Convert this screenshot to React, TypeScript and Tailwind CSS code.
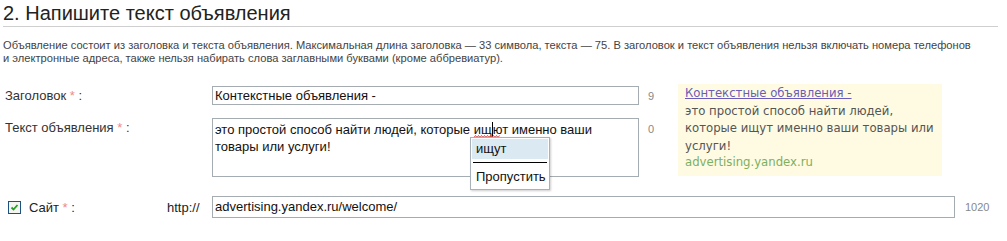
import React from "react";

const sans = { fontFamily: '"Liberation Sans", Arial, sans-serif' };

function Star() {
  return <span className="text-[#f08a8a]">*</span>;
}

function Squiggle() {
  return (
    <svg className="absolute left-0 bottom-[-1px]" width="26" height="3" viewBox="0 0 26 3">
      <path
        d="M0 2.5 L1.5 0.5 L3 2.5 L4.5 0.5 L6 2.5 L7.5 0.5 L9 2.5 L10.5 0.5 L12 2.5 L13.5 0.5 L15 2.5 L16.5 0.5 L18 2.5 L19.5 0.5 L21 2.5 L22.5 0.5 L24 2.5 L25.5 0.5"
        fill="none"
        stroke="#d94a4a"
        strokeWidth="1"
      />
    </svg>
  );
}

export default function App() {
  return (
    <div className="w-[1007px] h-[241px] bg-white text-[#333] overflow-hidden" style={sans}>
      {/* заголовок секции */}
      <div className="pl-[3px] pt-[2px] pr-[9px]">
        <h2 className="text-[20px] leading-[22px] text-[#222] pb-[2px] border-b border-[#cfcfcf]">
          2. Напишите текст объявления
        </h2>
        <p className="mt-[12px] text-[11.15px] leading-[13px] text-[#444]">
          Объявление состоит из заголовка и текста объявления. Максимальная длина заголовка — 33 символа, текста — 75. В заголовок и текст объявления нельзя включать номера телефонов
          <br />и электронные адреса, также нельзя набирать слова заглавными буквами (кроме аббревиатур).
        </p>
      </div>

      {/* поля */}
      <div className="flex mt-[20px]">
        <div className="flex flex-col gap-[13px]">
          <div className="flex items-start">
            <label className="w-[212px] pl-[5px] pt-[3px] text-[13px] leading-[15px]">
              Заголовок <Star /> :
            </label>
            <div className="w-[427px] h-[19px] mt-[1px] border border-[#a5acb2] px-[2px] text-[13px] leading-[17px] text-[#111]">
              Контекстные объявления -
            </div>
            <span className="w-[39px] pl-[9px] pt-[5px] text-[11px] leading-[13px] text-[#888]">9</span>
          </div>
          <div className="flex items-start">
            <label className="w-[212px] pl-[5px] pt-[2px] text-[13px] leading-[15px]">
              Текст объявления <Star /> :
            </label>
            <div className="relative w-[427px] h-[59px] border border-[#a5acb2] px-[2px] pt-[2px] text-[13px] leading-[17px] text-[#111]">
              это простой способ найти людей, которые{" "}
              <span className="relative">
                ищ<span className="inline-block w-px h-[15px] bg-black align-[-3px]" />ют
                <Squiggle />
              </span>{" "}
              именно ваши
              <br />
              товары или услуги!
              <div className="absolute left-[257px] top-[18px] w-[80px] bg-white border border-[#a8b0b8] shadow-[1px_1px_2px_rgba(0,0,0,0.2)] p-[1px] z-10">
                <div className="bg-[#dbe9f2] h-[20px] px-[4px] text-[13px] leading-[20px] text-[#111]">ищут</div>
                <div className="h-[1px] bg-black mt-[3px] mb-[4px] mx-[1px]" />
                <div className="h-[21px] px-[4px] text-[13px] leading-[20px] text-[#111]">Пропустить</div>
              </div>
            </div>
            <span className="w-[39px] pl-[9px] pt-[5px] text-[11px] leading-[13px] text-[#888]">0</span>
          </div>
        </div>

        {/* предпросмотр */}
        <div
          className="w-[264px] h-[92px] bg-[#fffbe3] mt-[-1px] px-[7px] pt-[1px] text-[11.7px] leading-[17.5px] text-[#555]"
          style={{ fontFamily: '"DejaVu Sans", Verdana, sans-serif' }}
        >
          <a className="text-[#6a5cb8] underline">Контекстные объявления -</a>
          <div>это простой способ найти людей, которые ищут именно ваши товары или услуги!</div>
          <div className="text-[#7caf62] mt-[-1px]">advertising.yandex.ru</div>
        </div>
      </div>

      {/* сайт */}
      <div className="flex items-center mt-[19px]">
        <div className="w-[167px] flex items-center pl-[8px]">
          <span className="w-[13px] h-[13px] border border-[#1c5180] bg-[#f4f4f0] flex items-center justify-center">
            <svg width="9" height="9" viewBox="0 0 9 9">
              <path d="M1.5 4.5 L3.5 6.5 L7.5 2" fill="none" stroke="#21a121" strokeWidth="1.8" />
            </svg>
          </span>
          <span className="ml-[8px] text-[13px] leading-[15px] text-[#222]">
            Сайт <Star /> :
          </span>
        </div>
        <span className="w-[45px] text-[13px] leading-[15px] text-[#222]">http://</span>
        <div className="w-[743px] h-[22px] border border-[#a5acb2] px-[2px] text-[13px] leading-[20px] text-[#111]">
          advertising.yandex.ru/welcome/
        </div>
        <span className="pl-[10px] text-[11px] text-[#888]">1020</span>
      </div>
    </div>
  );
}
